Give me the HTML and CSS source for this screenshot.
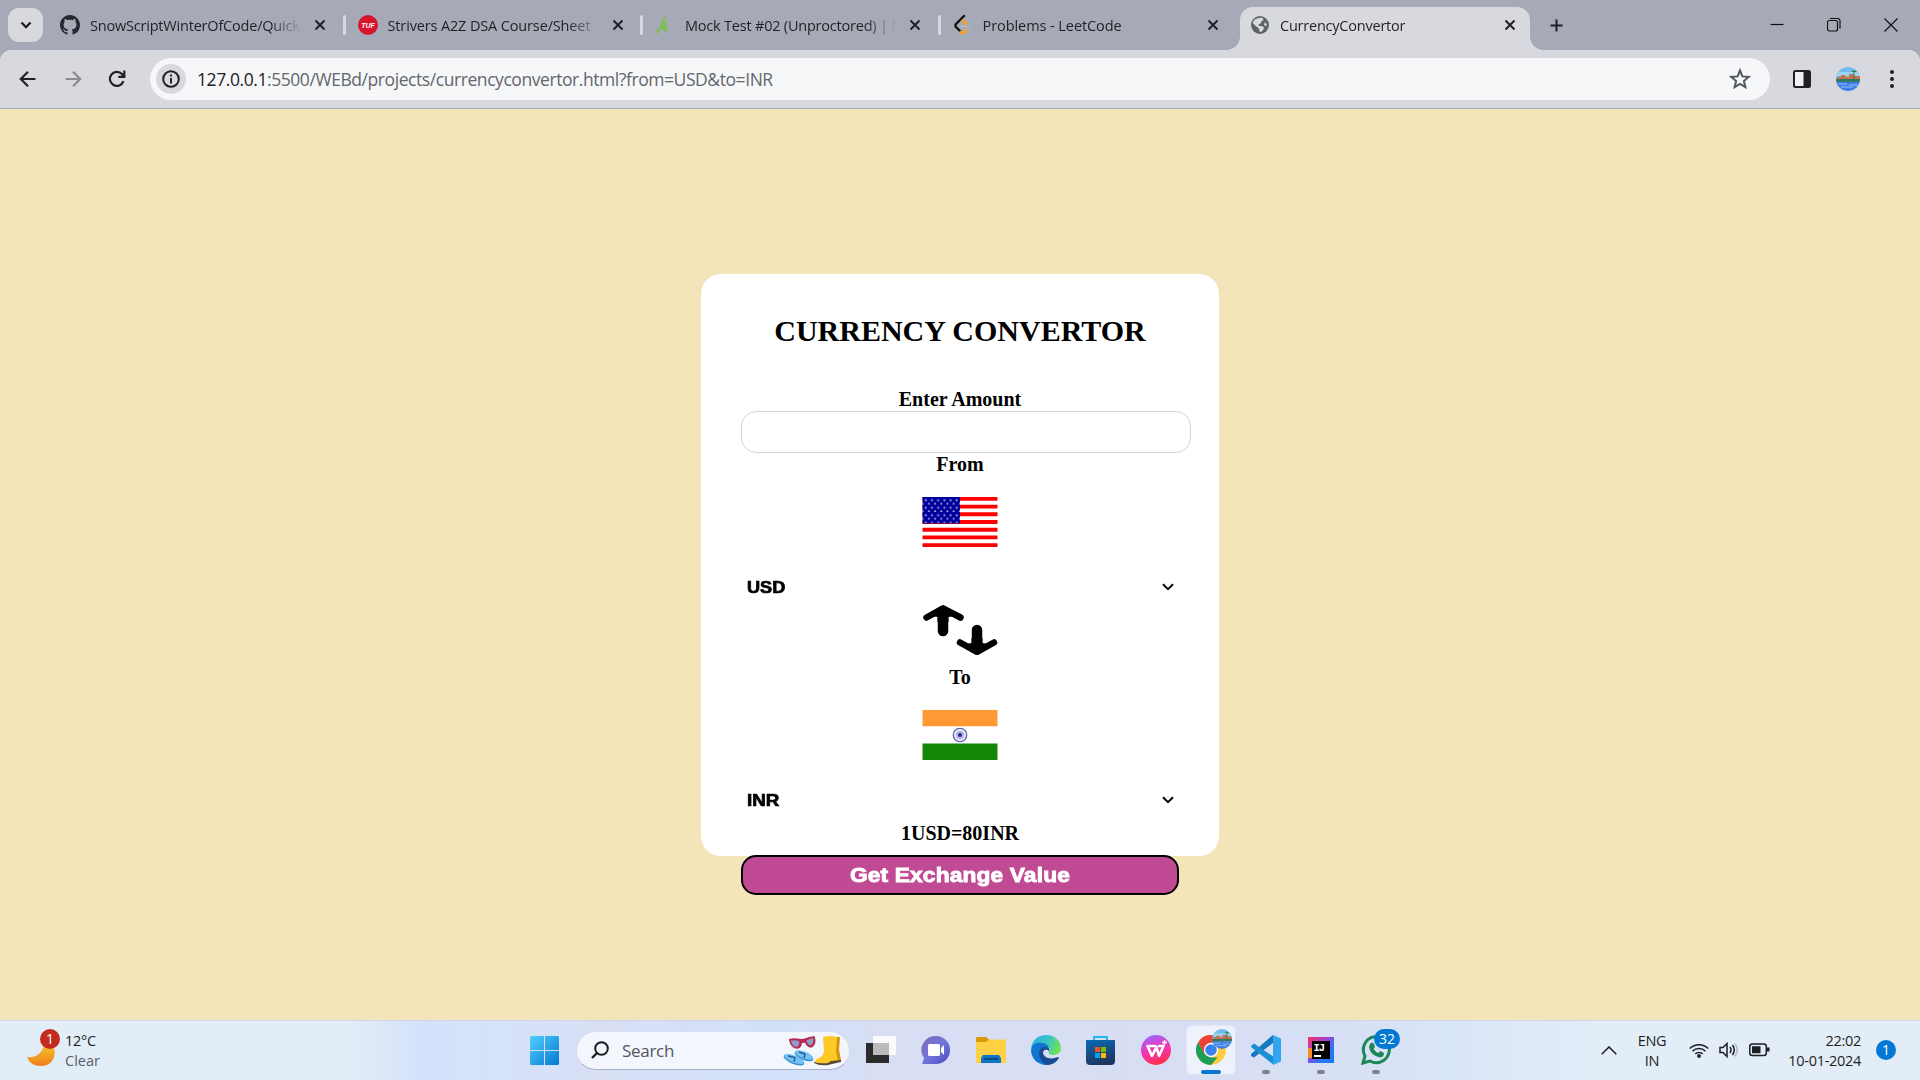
FILE: index.html
```html
<!DOCTYPE html>
<html lang="en">
<head>
<meta charset="utf-8">
<title>CurrencyConvertor</title>
<link rel="stylesheet" href="styles.css">
</head>
<body>
<header class="browser">
  <div class="tabstrip">
    <button class="tab-search" aria-label="Search tabs"><svg width="14" height="14" viewBox="0 0 14 14"><path d="M2.500 4.500 7 9.200l4.500-4.700" fill="none" stroke="#1d1f22" stroke-width="2.300"/></svg></button>
    <div class="tab first">
      <svg class="fav" viewBox="0 0 16 16"><path fill="#24292f" d="M8 0C3.580 0 0 3.580 0 8c0 3.540 2.290 6.530 5.470 7.590.4.070.55-.17.55-.38 0-.19-.01-.82-.01-1.490-2.010.37-2.530-.49-2.690-.94-.09-.23-.48-.94-.82-1.130-.28-.15-.68-.52-.01-.53.63-.01 1.080.58 1.230.82.72 1.210 1.870.87 2.330.66.070-.52.28-.87.51-1.070-1.780-.2-3.640-.89-3.640-3.950 0-.87.31-1.590.82-2.150-.08-.2-.36-1.020.08-2.120 0 0 .67-.21 2.200.82.64-.18 1.320-.27 2-.27s1.360.09 2 .27c1.530-1.040 2.200-.82 2.200-.82.44 1.100.16 1.920.08 2.120.51.56.82 1.270.82 2.150 0 3.070-1.870 3.750-3.650 3.950.29.25.54.73.54 1.480 0 1.070-.01 1.930-.01 2.200 0 .21.15.46.55.38A8.010 8.010 0 0 0 16 8c0-4.420-3.580-8-8-8z"/></svg>
      <span class="tab-title fade t1">SnowScriptWinterOfCode/Quick</span>
      <svg class="x" viewBox="0 0 12 12"><path d="m1.500 1.500 9 9m0-9-9 9"/></svg>
    </div>
    <div class="tab">
      <svg class="fav" viewBox="0 0 20 20"><circle cx="10" cy="10" r="10" fill="#d9152c"/><text x="10" y="12.600" text-anchor="middle" class="tuf">TUF</text></svg>
      <span class="tab-title fade t2">Strivers A2Z DSA Course/Sheet</span>
      <svg class="x" viewBox="0 0 12 12"><path d="m1.500 1.500 9 9m0-9-9 9"/></svg>
    </div>
    <div class="tab">
      <svg class="fav" viewBox="0 0 20 20"><g fill="none" stroke="#7ac142" stroke-width="1.500"><path d="M10.500 1 7 8l4-1-4 6 5.500-1.500M9 4 5 13l-4 5.500M6 12l6 5M10 9l1 8"/></g></svg>
      <span class="tab-title fade t3">Mock Test #02 (Unproctored) | M</span>
      <svg class="x" viewBox="0 0 12 12"><path d="m1.500 1.500 9 9m0-9-9 9"/></svg>
    </div>
    <div class="tab">
      <svg class="fav" viewBox="0 0 20 20"><g fill="none" stroke-width="2.400" stroke-linecap="round"><path d="M11 1 3 9q-1.200 1.500 0 3l4.500 4.500" stroke="#111"/><path d="m9.500 5.500 3.500 3M7.500 17q3 2.500 6-1.500" stroke="#ffa116"/><path d="M8 11.500h8" stroke="#b9bac0" stroke-width="1.500"/></g></svg>
      <span class="tab-title fade t4">Problems - LeetCode</span>
      <svg class="x" viewBox="0 0 12 12"><path d="m1.500 1.500 9 9m0-9-9 9"/></svg>
    </div>
    <div class="tab active">
      <svg class="fav" viewBox="0 0 20 20"><circle cx="10" cy="10" r="9" fill="#5f6368"/><path fill="#d8d9df" d="M8.500 3c2-.5 4 0 4 0l1 2-2 1.500-1 2-2 1 .5 1.500h3l2 1.500-.5 2-2.500 2.500-1.500-.5-.5-3-2.500-2-3.500-3c0-3 2.500-5 5.500-5.500zM15 7l2 3-1 1-2-1z"/></svg>
      <span class="tab-title fade t5">CurrencyConvertor</span>
      <svg class="x" viewBox="0 0 12 12"><path d="m1.500 1.500 9 9m0-9-9 9"/></svg>
    </div>
    <svg class="newtab" viewBox="0 0 14 14"><path d="M7 .5v13M.5 7h13"/></svg>
    <div class="winctl">
      <svg viewBox="0 0 14 14"><path d="M.5 6.500h13"/></svg>
      <svg viewBox="0 0 14 14"><rect x=".5" y="2.500" width="10" height="10.500" rx="2"/><path d="M3 .5h7.500a2.500 2.500 0 0 1 2.500 2.500v7.500"/></svg>
      <svg viewBox="0 0 14 14"><path d="m.5.500 13 13m0-13-13 13"/></svg>
    </div>
  </div>
  <div class="toolbar">
    <svg class="nav" viewBox="0 0 20 20"><path d="M17.500 10H3M10 2.800 2.800 10l7.200 7.200"/></svg>
    <svg class="nav off" viewBox="0 0 20 20"><path d="M2.500 10H17M10 2.800l7.200 7.200-7.200 7.200"/></svg>
    <svg class="nav" viewBox="0 0 20 20"><path d="M16.500 12.200A7 7 0 1 1 15.200 5.300l1.800 2.200M17.300 1.500v6.300h-6"/></svg>
    <div class="omnibox">
      <span class="info"><svg width="18" height="18" viewBox="0 0 18 18"><circle cx="9" cy="9" r="7.800" fill="none" stroke="#1f2124" stroke-width="2"/><path d="M9 4.500v2M9 8v5.500" stroke="#1f2124" stroke-width="1.900"/></svg></span>
      <span class="url"><b>127.0.0.1</b>:5500/WEBd/projects/currencyconvertor.html?from=USD&amp;to=INR</span>
      <svg class="star" viewBox="0 0 24 24"><path d="m12 3.500 2.400 5.900 6.300.5-4.800 4.100 1.500 6.200L12 16.900l-5.400 3.300 1.500-6.200-4.800-4.100 6.300-.5z" fill="none" stroke="#54575c" stroke-width="2"/></svg>
    </div>
    <svg class="panel" viewBox="0 0 18 18"><rect x="1" y="1" width="16" height="16" rx="1.500" fill="#f0f1f4" stroke="#1f2124" stroke-width="2"/><path d="M10.500 1H17v16h-6.500z" fill="#1f2124"/></svg>
    <svg class="avatar" viewBox="0 0 24 24"><use href="#photo"/></svg>
    <svg class="dots" viewBox="0 0 4 18"><circle cx="2" cy="2" r="2"/><circle cx="2" cy="9" r="2"/><circle cx="2" cy="16" r="2"/></svg>
  </div>
</header>

<main class="page">
  <form class="card">
    <h2>CURRENCY CONVERTOR</h2>
    <label for="amount">Enter Amount</label>
    <input id="amount" class="amount" type="text">
    <label>From</label>
    <svg class="flag" viewBox="0 0 75 50">
      <defs><pattern id="stars" width="6.200" height="7.500" patternUnits="userSpaceOnUse"><rect x="2.400" y="2.400" width="1.700" height="1.700"/><rect x="5.500" y="6" width=".7" height="1.700"/><rect y="6" width="1" height="1.700"/></pattern></defs>
      <path fill="#fff" d="M0 0h75v50H0z"/>
      <path stroke="#f00" stroke-width="3.850" d="M0 1.900h75M0 9.600h75M0 17.300h75M0 25h75M0 32.700h75M0 40.400h75M0 48.100h75"/>
      <path fill="#00009c" d="M0 0h37.500v26.500H0z"/><path fill="url(#stars)" class="starfill" d="M0 0h37.500v26H0z"/>
    </svg>
    <div class="select"><span>USD</span><svg viewBox="0 0 12 8"><path d="m1 1.200 5 5 5-5"/></svg></div>
    <svg class="swap" viewBox="0 0 75 50"><g fill="none" stroke="#000" stroke-linecap="round" stroke-linejoin="round"><path stroke-width="10.500" d="M20.500 8v18M54.500 25v17"/><path stroke-width="6.500" d="M4 12.500 20.500 3.300 38 12.500M37.500 37.500l17 9.300 17-9.300"/></g><path d="m9 11 11.500-8L33 11l-7 1v5H15v-5zM43 39l11.500 8L66 39l-6-1v-5H49v5z"/></svg>
    <label>To</label>
    <svg class="flag" viewBox="0 0 75 50"><path fill="#f93" d="M0 0h75v16.500H0z"/><path fill="#fff" d="M0 16.500h75v17H0z"/><path fill="#138808" d="M0 33.500h75V50H0z"/><circle cx="37.500" cy="25" r="6.800" fill="#e3e3f3" stroke="#5252ae" stroke-width="1.100"/><circle cx="37.500" cy="25" r="4" fill="#b4b4dc"/><circle cx="37.500" cy="25" r="2" fill="#28289a"/></svg>
    <div class="select inr"><span>INR</span><svg viewBox="0 0 12 8"><path d="m1 1.200 5 5 5-5"/></svg></div>
    <div class="result">1USD=80INR</div>
    <button class="go" type="button"><span>Get Exchange Value</span></button>
  </form>
</main>

<footer class="taskbar">
  <div class="weather">
    <div class="moon"><svg width="30" height="36" viewBox="0 0 30 36"><defs><linearGradient id="mg" x2="0" y2="1"><stop offset="0" stop-color="#f6c42c"/><stop offset="1" stop-color="#f07d1d"/></linearGradient></defs><path fill="url(#mg)" d="M27 14c5 12-2 21-12 21C8 35 3 32 1 26c8 1 15-3 17-12z"/></svg><span class="badge red">1</span></div>
    <div class="wtext"><span>12°C</span><span class="sub">Clear</span></div>
  </div>
  <div class="apps">
    <svg class="start" viewBox="0 0 29 29"><defs><linearGradient id="wg" x1="0" y1="0" x2="1" y2="1" ><stop offset="0" stop-color="#50d0fb"/><stop offset="1" stop-color="#0678d4"/></linearGradient></defs><path fill="url(#wg)" d="M1 0h13v14H0V1zM15 0h13l1 1v13H15zM0 15h14v14H1l-1-1zM15 15h14v13l-1 1H15z"/></svg>
    <div class="search">
      <svg width="18" height="18" viewBox="0 0 18 18"><circle cx="10.500" cy="7.500" r="6.300" fill="none" stroke="#1c1d20" stroke-width="2"/><path d="m6 12-5 5" stroke="#1c1d20" stroke-width="2.400"/></svg>
      <span>Search</span>
      <svg class="promo" width="60" height="32" viewBox="0 0 60 32">
        <g transform="rotate(-4 20 8)"><path d="M7 4q6-1 12 1h3q5-2 11-2 2 8-3 11-5 1-7-5h-3q-1 5-5 5.500Q8 14 7 4z" fill="#b62c55"/><path d="M9 6q4-1 8 1 1 4-3 5.500Q10 12 9 6zM24.500 7q3-2 7-2 0 5-3 7-3-1-4-5z" fill="#8c9fc6"/></g>
        <g fill="#3a8fd0"><ellipse cx="12" cy="26" rx="11" ry="4" transform="rotate(22 12 26)"/><ellipse cx="22" cy="22" rx="10" ry="4" transform="rotate(22 22 22)"/></g><g fill="#72c0f4"><ellipse cx="12" cy="25" rx="10.500" ry="3.500" transform="rotate(22 12 25)"/><ellipse cx="22" cy="21" rx="9.500" ry="3.500" transform="rotate(22 22 21)"/></g><path d="m6 22 7 1.500-1 4M17 18l6 2-1 4" fill="none" stroke="#245c98" stroke-width="1.400"/>
        <path fill="#d99407" d="M48 3h10l-1 13 2 10q-5 3-8 0z"/><path fill="#ffc928" d="M41 3q7-2 14 0l-1 15 2 9q-4 3-10 2-8 2-13-1 0-3 6-5 3-3 3-6z"/><path d="M32 28q6 2 14 1l3-2 10-1v2l-9 2-4 1q-9 1-14-2z" fill="#554a35"/>
      </svg>
    </div>
    <div class="icons">
      <span class="app"><svg viewBox="0 0 30 30"><path fill="#2b2b2c" d="M0 8h23v20H0z"/><path fill="#fafafa" d="M7 1h23v19H7z"/><path fill="#bbb" d="M7 8h16v12H7z"/></svg></span>
      <span class="app"><svg viewBox="0 0 30 30"><defs><linearGradient id="cg" x1="0" y1="0" x2="1" y2="1"><stop offset="0" stop-color="#8668b6"/><stop offset=".5" stop-color="#7176dc"/><stop offset="1" stop-color="#5148ba"/></linearGradient></defs><path fill="url(#cg)" d="M15 1a14 14 0 1 1 0 28H1l2-6A14 14 0 0 1 15 1z"/><rect x="7" y="9" width="12" height="12" rx="1.500" fill="#fff"/><path d="m20 13 3-3v10l-3-3z" fill="#fff"/></svg></span>
      <span class="app"><svg viewBox="0 0 30 30"><path fill="#d99a08" d="M1 2h9l3 2.500h0L11 8H0V3z"/><path fill="#ffcf44" d="M0 7h10l3-2.500h17V28H0z"/><path fill="#0b76c8" d="M5 28v-5l2-3h16l2 3v5z"/><path stroke="#073f72" d="M8 24h14" stroke-width="1.500"/></svg></span>
      <span class="app"><svg viewBox="0 0 30 30"><defs><linearGradient id="eg" x2="1" y2=".3"><stop offset="0" stop-color="#28a9e5"/><stop offset=".6" stop-color="#37c6c7"/><stop offset="1" stop-color="#6be05c"/></linearGradient></defs><path fill="url(#eg)" d="M0 14C1 5 7 0 15 0c9 0 15 6 15 13 0 5-4 7-8 7-4 0-5-2-4-4 2-3-1-6-5-6C7 10 2 11 0 14z"/><path fill="#1176cf" d="M0 15c1-6 6-8 11-7 5 0 8 4 7 8-2-2-5-2-6 1-1 6 4 10 13 8-3 4-7 5-11 5C6 29 0 23 0 15z"/><path fill="#164d94" d="M8 18c0-4 3-6 6-6 3 0 5 2 4 4-2-2-5-2-6 1 0 6 8 8 15 5l1 1c-3 5-8 7-12 7-5-2-8-7-8-12z"/></svg></span>
      <span class="app"><svg viewBox="0 0 30 30"><defs><linearGradient id="sg" x2=".3" y2="1"><stop offset="0" stop-color="#086bb6"/><stop offset="1" stop-color="#1e3762"/></linearGradient></defs><path d="M8 6V2h13v4" fill="none" stroke="#20b8f4" stroke-width="2"/><path fill="url(#sg)" d="M0 5h29v21q0 4-4 4H4q-4 0-4-4z"/><path fill="#f25022" d="M9 12h5v5H9z"/><path fill="#7fba00" d="M15 12h5v5h-5z"/><path fill="#00a4ef" d="M9 18h5v5H9z"/><path fill="#ffb900" d="M15 18h5v5h-5z"/></svg></span>
      <span class="app"><svg viewBox="0 0 30 30"><defs><linearGradient id="pg" x1=".2" y1="0" x2=".5" y2="1"><stop offset="0" stop-color="#9a66ff"/><stop offset=".55" stop-color="#f433b4"/><stop offset="1" stop-color="#ff3147"/></linearGradient></defs><circle cx="15" cy="15" r="15" fill="url(#pg)"/><path d="M14 11H6.500l4.500 10 4.500-9 2.500 9 4.500-10H18" fill="none" stroke="#fff" stroke-width="2.600" stroke-linejoin="round" stroke-linecap="round"/><path d="M23.500 5v5M21 7.500h5" stroke="#fff" stroke-width="1.400"/></svg></span>
      <span class="app current"><svg viewBox="0 0 30 30"><circle cx="15" cy="15" r="15" fill="#ffcd40"/><path fill="#ea4335" d="M2 7.500a15 15 0 0 1 26 0H15L8.500 19z"/><path fill="#1f9d55" d="M2 7.500 8.500 18.700 15 22.500h6.500L15 30A15 15 0 0 1 2 7.500z"/><circle cx="15" cy="15" r="7.200" fill="#fff"/><circle cx="15" cy="15" r="5.800" fill="#3b82ee"/></svg><svg class="mini" viewBox="0 0 24 24"><use href="#photo"/></svg><i class="bar"></i></span>
      <span class="app"><svg viewBox="0 0 30 30"><path fill="#1479bd" d="m0 19 22-19v8L3 22.500 0 21z"/><path fill="#1b8fd6" d="m0 11 3-2.500L23 22v8L0 12z"/><path fill="#30a7ef" d="m22 0 8 3.500v23L22 30z"/></svg><i></i></span>
      <span class="app"><svg viewBox="0 0 30 30"><defs><linearGradient id="ig" x2="1" y2="1"><stop offset="0" stop-color="#fb315c"/><stop offset=".35" stop-color="#ad3bd0"/><stop offset=".7" stop-color="#2a77f6"/><stop offset="1" stop-color="#147bf4"/></linearGradient></defs><path fill="url(#ig)" d="M2 2h26v26H2z"/><path fill="#f98a28" d="M2 13h4v10H2z"/><path d="M6 6h18v18H6z"/><path fill="#fff" d="M8 20h7v2H8z"/><text x="7.500" y="15.500" class="ij">IJ</text></svg><i></i></span>
      <span class="app"><svg viewBox="0 0 30 30"><path fill="none" stroke="#1c8755" stroke-width="3" d="M2 28l2-7a13 13 0 1 1 5 5z"/><path fill="#1c8755" d="M9 9q2-3 4 0l1 3-1.500 2q2 3 5 4l1.500-2 4 2q0 4-4 4.500Q9 20 8 12z"/></svg><span class="badge blue wide">32</span><i></i></span>
    </div>
  </div>
  <div class="tray">
    <svg class="up" viewBox="0 0 16 9"><path d="m.7 8.300 7.300-7.300 7.300 7.300"/></svg>
    <div class="lang"><span>ENG</span><span>IN</span></div>
    <svg class="wifi" viewBox="0 0 20 15"><path d="M.8 5.500a13 13 0 0 1 18.400 0M3.500 8.300a9.200 9.200 0 0 1 13 0M6.200 11a5.400 5.400 0 0 1 7.600 0"/><circle cx="10" cy="13" r="1.900"/></svg>
    <svg class="vol" viewBox="0 0 20 16"><path d="M1 5.500h3L8 1.500v13l-4-4H1zM11 5q2 3 0 6M13.500 3q3.500 5 0 10"/><path class="dim" d="M16 1.500q4.500 6.500 0 13"/></svg>
    <svg class="bat" viewBox="0 0 21 14"><rect x=".8" y="1" width="16.500" height="11.500" rx="2.500"/><path class="fill" d="M3 3.200h8.500v7H3zM18 4.500h2.500v4H18z"/></svg>
    <div class="clock"><span>22:02</span><span class="date">10-01-2024</span></div>
    <span class="badge blue">1</span>
  </div>
</footer>

<svg width="0" height="0" class="defs"><defs><clipPath id="round"><circle cx="12" cy="12" r="12"/></clipPath><g id="photo" clip-path="url(#round)"><path fill="#72bdf0" d="M0 0h24v15H0z"/><path fill="#9bd5f2" d="M0 5h24v4H0z"/><path fill="#c9714d" d="M1 10h4V8h4l1 2h3V7h4l2 2h5v5H1z"/><path fill="#317a60" d="M17.500 4h1v9h-1zM15 5l3-2 3 2-3 0zM0 12h24v3H0z"/><path fill="#3e7dea" d="M0 15h24v9H0z"/><path stroke="#91c4f5" d="M2 17h9M13 18h9M5 20h12"/></g></defs></svg>
</body>
</html>
```
FILE: styles.css
```css
* { box-sizing: border-box; }
body {
  margin: 0;
  width: 1920px;
  height: 1080px;
  display: flex;
  flex-direction: column;
  overflow: hidden;
  font-family: "Open Sans", "Noto Sans", sans-serif;
}
svg { display: block; flex: none; }
button { font: inherit; border: 0; padding: 0; }
.defs { position: absolute; }

/* browser window */
.browser { height: 109px; background: #a6aab6; border-bottom: 1px solid #a5a9b6; flex: none; }
.tabstrip { height: 50px; display: flex; align-items: center; padding-left: 8px; }
.tab-search { width: 35px; height: 34px; border-radius: 11px; background: #d8d9df; display: flex; align-items: center; justify-content: center; margin-right: 3px; }
.tab { position: relative; width: 297.5px; height: 50px; padding-left: 14px; display: flex; align-items: center; flex: none; }
.tab::before { content: ""; position: absolute; left: -1px; top: 15px; width: 3px; height: 20px; border-radius: 2px; background: #d8d9df; }
.tab.first::before { display: none; }
.tab.active::before { left: 4px; top: 7px; width: 290px; height: 43px; border-radius: 13px 13px 0 0; }
.tab.active::after { content: ""; position: absolute; left: -9px; right: -9px; bottom: 0; height: 13px;
  background: radial-gradient(circle at 0 0, transparent 12.5px, #d8d9df 13px) left / 13px 13px no-repeat, radial-gradient(circle at 100% 0, transparent 12.5px, #d8d9df 13px) right / 13px 13px no-repeat; }
.tab > * { position: relative; z-index: 1; }
.fav { width: 20px; height: 20px; margin-right: 10px; }
.tab-title { width: 216px; overflow: hidden; white-space: nowrap; font-size: 14.5px; line-height: 22px; padding-top: 1px; color: #1f2124; margin-right: 8px; }
.t1 { letter-spacing: -0.2px; }
.t2 { letter-spacing: -0.14px; }
.t3 { letter-spacing: -0.21px; }
.t4 { letter-spacing: -0.07px; }
.t5 { letter-spacing: -0.22px; }
.fade { -webkit-mask-image: linear-gradient(90deg, #000 180px, transparent 212px); mask-image: linear-gradient(90deg, #000 180px, transparent 212px); }
.x { width: 12px; height: 12px; stroke: #1f2124; stroke-width: 2; fill: none; }
.tuf { font: italic bold 7px "Liberation Sans", sans-serif; fill: #fff; }
.newtab { width: 13px; height: 13px; margin-left: 16px; stroke: #1f2124; stroke-width: 2.200; }
.winctl { margin-left: auto; display: flex; gap: 43px; padding-right: 22px; }
.winctl svg { width: 14px; height: 14px; fill: none; stroke: #111; stroke-width: 1.200; }
.toolbar { height: 58px; display: flex; align-items: center; background: #d8d9df; border-radius: 11px 11px 0 0; padding-left: 18px; }
.nav { width: 20px; height: 20px; margin-right: 25px; fill: none; stroke: #1f2124; stroke-width: 2.200; }
.nav.off { stroke: #8b8c92; margin-right: 24px; }
.omnibox { width: 1620px; height: 42px; border-radius: 21px; background: #f6f7f9; margin-left: -2px; padding: 0 18px 0 6px; display: flex; align-items: center; }
.info { width: 30px; height: 30px; border-radius: 50%; background: #d8d9df; display: flex; align-items: center; justify-content: center; margin-right: 11px; }
.url { font-size: 17.500px; letter-spacing: -0.43px; color: #63666b; white-space: nowrap; }
.url b { font-weight: 400; color: #1f2124; }
.star { width: 24px; height: 24px; margin-left: auto; }
.panel { width: 18px; height: 18px; margin-left: 23px; }
.avatar { width: 24px; height: 24px; margin-left: 25px; }
.dots { width: 4px; height: 18px; margin-left: 30px; fill: #1f2124; }

/* converter page */
.page { height: 911px; flex: none; background: #f3e4b9; display: flex; justify-content: center; align-items: flex-start; padding-top: 165px; }
.card { width: 518px; height: 582px; padding: 40px 40px 0; border-radius: 20px; background: #fff; display: flex; flex-direction: column; align-items: center; font-family: "Liberation Serif", serif; color: #000; }
.card > * { flex: none; }
h2 { margin: 0 0 40px; font-size: 30px; line-height: 34px; }
label, .result { height: 23px; font-size: 20px; font-weight: 700; line-height: 23px; }
.amount { width: 450px; height: 42px; align-self: flex-start; border: 1px solid #d3d3d3; border-radius: 15px; background: #fff; }
.flag { width: 76px; height: 50px; margin-top: 21px; margin-bottom: 25px; }
.starfill { opacity: .75; }
#stars rect { fill: #fff; }
.select { width: 100%; height: 30px; padding: 0 5px 0 6px; display: flex; align-items: center; justify-content: space-between; font: 700 16.500px "Liberation Sans", sans-serif; -webkit-text-stroke: .7px #000; }
.select span { transform: scaleX(1.1); transform-origin: left; }
.inr span { transform: scaleX(1.14); }
.select svg { width: 12px; height: 8px; fill: none; stroke: #000; stroke-width: 2; }
.swap { width: 76px; height: 50px; margin: 3px 0 11px; }
.result { margin: 7px 0 10px; }
.go { width: 438px; height: 40px; border: 2px solid #000; border-radius: 15px; padding-top: 1px; background: #c04a93; color: #fff; font: 700 20px "Liberation Sans", sans-serif; letter-spacing: .15px; -webkit-text-stroke: .9px #fff; }
.go span { display: inline-block; transform: scaleX(1.135); }

/* taskbar */
.taskbar { height: 60px; flex: none; border-top: 1px solid #cbd8ee; padding-bottom: 1px; display: flex; align-items: center; background: linear-gradient(90deg, #e2eef7 0, #e2edf7 350px, #d3e0fa 430px, #d4e3fa 470px, #d8dff5 600px, #d1e1fa 780px, #d8def3 880px, #d7dff5 1350px, #d9e6f8 1450px, #e2edf8 1600px, #e2edf8 100%); color: #1d1f22; }
.weather { width: 530px; padding-left: 26px; display: flex; align-items: center; }
.moon { position: relative; width: 30px; height: 38px; margin-right: 9px; }
.badge { display: flex; align-items: center; justify-content: center; height: 20px; min-width: 20px; border-radius: 10px; color: #fff; font-size: 14px; line-height: 20px; }
.red { position: absolute; left: 14px; top: -2px; background: #c42b1c; }
.blue { background: #0078d4; }
.wtext, .lang, .clock { display: flex; flex-direction: column; padding-top: 1px; font-size: 14.500px; line-height: 20px; letter-spacing: -0.3px; }
.sub { color: #5b6067; }
.wtext .sub { letter-spacing: 0; }
.apps { display: flex; align-items: center; }
.start { width: 29px; height: 29px; margin-right: 17px; }
.search { width: 274px; height: 39px; border-radius: 20px; background: #f3f6fd; border: 1px solid #d5dbeb; border-bottom-color: #a9b2c8; display: flex; align-items: center; padding: 0 7px 0 14px; font-size: 17px; letter-spacing: -0.3px; color: #54575d; }
.search span { margin-left: 13px; }
.promo { margin-left: auto; }
.icons { display: flex; margin-left: 7px; gap: 7px; }
.app { position: relative; width: 48px; height: 48px; display: flex; align-items: center; justify-content: center; border-radius: 5px; }
.app > svg { width: 30px; height: 30px; }
.current { background: #eef2fc; box-shadow: 0 0 0 1px #e1e5f2; }
.app .mini { position: absolute; width: 20px; height: 20px; left: 25px; top: 3px; }
.app > i { position: absolute; left: 20px; bottom: 0; width: 8px; height: 4px; border-radius: 2px; background: #7f838d; }
.app > i.bar { left: 14px; width: 20px; background: #0078d4; }
.ij { font: bold 10.500px "Liberation Mono", monospace; fill: #fff; letter-spacing: -1px; }
.wide { position: absolute; left: 22px; top: 3px; width: 26px; }
.tray { margin-left: auto; display: flex; align-items: center; padding-right: 24px; }
.tray svg { fill: none; stroke: #1d1f22; stroke-width: 1.500; }
.up { width: 16px; height: 9px; margin-right: 20px; }
.lang { align-items: center; width: 30px; margin-right: 22px; }
.tray .wifi { width: 20px; height: 15px; margin-right: 10px; }
.wifi circle { fill: #1d1f22; stroke: none; }
.vol { width: 20px; height: 16px; margin-right: 10px; }
.vol .dim { stroke: #b5bac3; }
.bat { width: 21px; height: 14px; margin-right: 17px; }
.tray .fill { fill: #1d1f22; stroke: none; }
.clock { align-items: flex-end; width: 74px; margin-right: 15px; white-space: nowrap; }
```
